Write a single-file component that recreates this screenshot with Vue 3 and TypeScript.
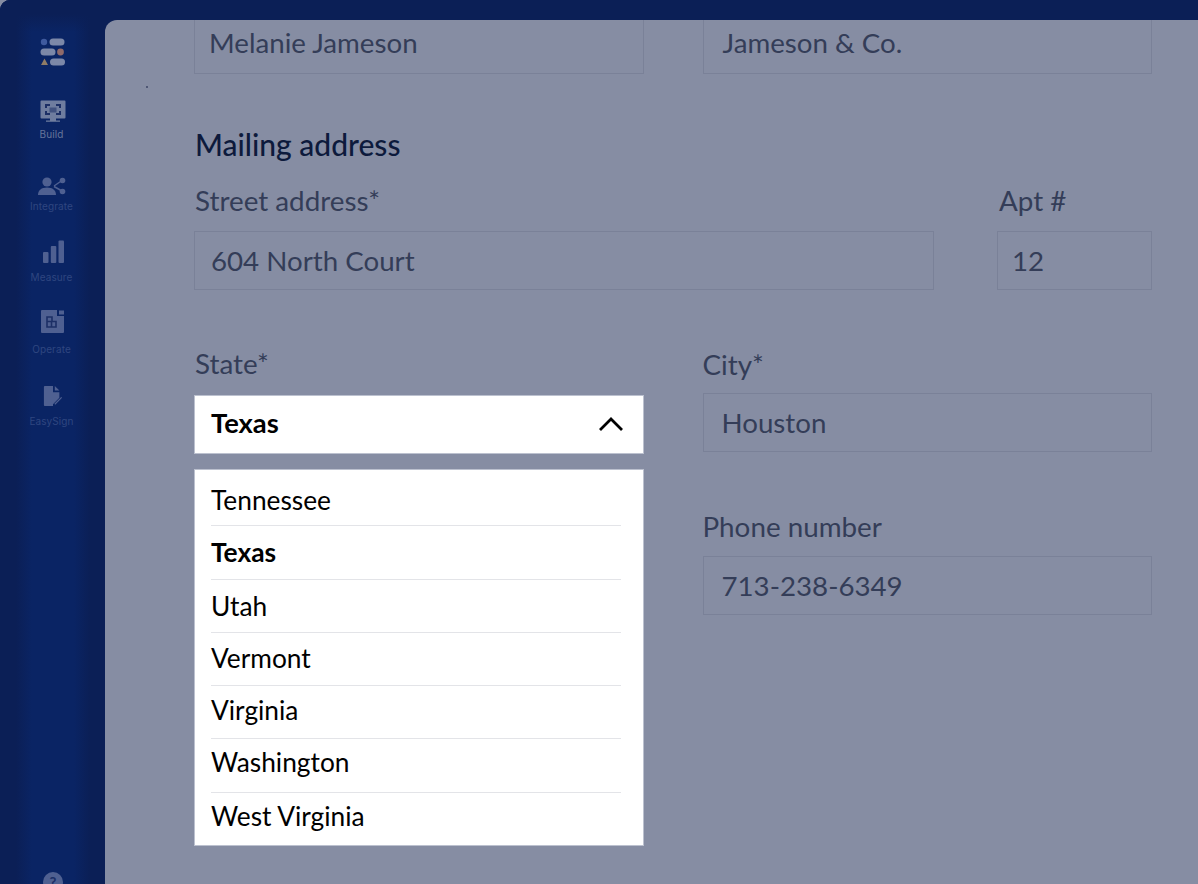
<script setup lang="ts">
interface NavItem {
  label: string;
  icon: string;
}

const navItems: NavItem[] = [
  { label: 'Build', icon: 'build' },
  { label: 'Integrate', icon: 'integrate' },
  { label: 'Measure', icon: 'measure' },
  { label: 'Operate', icon: 'operate' },
  { label: 'EasySign', icon: 'sign' },
];

const states = ['Tennessee', 'Texas', 'Utah', 'Vermont', 'Virginia', 'Washington', 'West Virginia'];

// option text drifts up a little against its divider further down the list
function optionStyle(index: number) {
  return { lineHeight: `${55 - 1.5 * index}px` };
}
</script>

<template>
  <div class="frame">
    <aside class="sidebar">
      <svg class="logo" width="26" height="28" viewBox="0 0 26 28">
        <circle cx="4" cy="4" r="3.2" fill="#3f5a9e" />
        <rect x="9.5" y="0.5" width="15" height="7" rx="3.5" fill="#7c88a8" />
        <rect x="0.5" y="10.5" width="15" height="7" rx="3.5" fill="#7c88a8" />
        <circle cx="20.5" cy="14" r="3.4" fill="#8f6a6a" />
        <path d="M4.500 20.500 L8 27 L1 27 Z" fill="#8f7c66" />
        <rect x="10" y="20.5" width="15" height="7" rx="3.5" fill="#7c88a8" />
      </svg>

      <div v-for="item in navItems" :key="item.label" class="nav-item" :class="[item.icon, { active: item.icon === 'build' }]">
        <svg v-if="item.icon === 'build'" width="26" height="24" viewBox="0 0 26 24">
          <path fill-rule="evenodd" fill="#6f7d9f" d="M1.5 0.5h23a1 1 0 0 1 1 1v16a1 1 0 0 1-1 1H16v2h4v1.2H6V20.500h4v-2H1.500a1 1 0 0 1-1-1v-16a1 1 0 0 1 1-1z" />
          <path fill="none" stroke="#1c2f66" stroke-width="2" d="M6 8V5h4M16 5h4v3M20 11v3h-4M10 14H6v-3" />
          <rect x="9.500" y="7.500" width="7" height="5" fill="#1c2f66" opacity="0.55" />
        </svg>
        <svg v-else-if="item.icon === 'integrate'" width="28" height="18" viewBox="0 0 28 18">
          <circle cx="9" cy="5" r="4.600" fill="#4f6091" />
          <path d="M0 18c0-4.800 3.500-7.500 9-7.500s9 2.700 9 7.500z" fill="#4f6091" />
          <path d="M16 9L24 3.500M16 9.500L24 14" stroke="#4f6091" stroke-width="1.500" />
          <circle cx="24.500" cy="3.500" r="2.800" fill="#4f6091" />
          <circle cx="24.500" cy="14.500" r="2.800" fill="#4f6091" />
        </svg>
        <svg v-else-if="item.icon === 'measure'" width="22" height="23" viewBox="0 0 22 23">
          <rect x="1" y="12" width="5.500" height="11" rx="1" fill="#4f6091" />
          <rect x="8.800" y="6" width="5.500" height="17" rx="1" fill="#4f6091" />
          <rect x="16.500" y="0.500" width="5.500" height="22.500" rx="1" fill="#4f6091" />
        </svg>
        <svg v-else-if="item.icon === 'operate'" width="24" height="23" viewBox="0 0 24 23">
          <path fill="#4f6091" d="M1 0h15v6h7v16a1 1 0 0 1-1 1H1a1 1 0 0 1-1-1V1a1 1 0 0 1 1-1z" />
          <rect x="18" y="0.500" width="5" height="4" fill="#4f6091" />
          <path fill="none" stroke="#1c2f66" stroke-width="1.600" d="M6 7h5v4.500H6zM6 11.500h9V17H6zM10.500 11.500V17" />
        </svg>
        <svg v-else width="20" height="20" viewBox="0 0 20 22">
          <path fill="#4f6091" d="M1 0h9v7h7v6l-7 7v2H1a1 1 0 0 1-1-1V1a1 1 0 0 1 1-1z" />
          <path fill="#4f6091" d="M12 0l5 5h-5z" />
          <path d="M12 20L19.500 12.500" stroke="#4f6091" stroke-width="1.400" />
        </svg>
        <span class="nav-label">{{ item.label }}</span>
      </div>

      <div class="help">?</div>
    </aside>

    <main class="panel">
      <div class="form">
        <div class="row row-names">
          <div class="input">Melanie Jameson</div>
          <div class="input">Jameson &amp; Co.</div>
        </div>

        <h2 class="heading">Mailing address</h2>

        <div class="row row-address">
          <div class="field">
            <label class="label">Street address*</label>
            <div class="input">604 North Court</div>
          </div>
          <div class="field field-apt">
            <label class="label">Apt #</label>
            <div class="input">12</div>
          </div>
        </div>

        <div class="row row-lower">
          <div class="field">
            <label class="label label-state">State*</label>
            <div class="select">
              <span>Texas</span>
              <svg width="26" height="16" viewBox="0 0 26 16">
                <path d="M2 14L13 3L24 14" fill="none" stroke="#000" stroke-width="2.800" />
              </svg>
            </div>
            <ul class="options">
              <li
                v-for="(state, index) in states"
                :key="state"
                :class="{ selected: state === 'Texas' }"
                :style="optionStyle(index)"
              >{{ state }}</li>
            </ul>
          </div>
          <div class="field field-right">
            <label class="label label-city">City*</label>
            <div class="input">Houston</div>
            <label class="label label-phone">Phone number</label>
            <div class="input">713-238-6349</div>
          </div>
        </div>
      </div>
      <span class="speck"></span>
    </main>
  </div>
</template>

<style>
html,
body {
  margin: 0;
  background: #868da3;
  overflow: hidden;
}
</style>

<style scoped>
.frame {
  display: flex;
  width: 1198px;
  height: 884px;
  overflow: hidden;
  border-radius: 10px 0 0 0;
  background: #0b1f56;
  font-family: Lato, 'Liberation Sans', sans-serif;
}

.sidebar {
  position: relative;
  flex: 0 0 105px;
  display: flex;
  flex-direction: column;
  align-items: center;
  padding-top: 38px;
  box-sizing: border-box;
  background:
    linear-gradient(180deg, #0b1f56 0, #0b1f56 14px, rgba(11, 31, 86, 0) 32px),
    linear-gradient(90deg, #0b1f56 0, #0b1f56 16px, #0a2464 32px, #0a2464 74px, #0b1f56 90px, #0b1f56 105px);
}

.logo {
  margin-bottom: 4px;
}

.nav-item {
  display: flex;
  flex-direction: column;
  align-items: center;
  justify-content: flex-end;
  height: 71.750px;
  padding-bottom: 2px;
  box-sizing: border-box;
}

.nav-label {
  margin-top: 8px;
  margin-left: -2px;
  font-family: Inter, sans-serif;
  font-size: 10px;
  letter-spacing: 0.1px;
  line-height: 12px;
  color: #2f4680;
}

.build .nav-label {
  margin-top: 4px;
  color: #66759b;
}

.integrate .nav-label {
  margin-top: 5px;
}

.operate .nav-label {
  margin-top: 10px;
}

.sign .nav-label {
  margin-top: 9px;
}

.help {
  position: absolute;
  left: 43px;
  top: 872px;
  width: 20px;
  height: 20px;
  border-radius: 50%;
  background: #4f6091;
  color: #1c2f66;
  font-size: 15px;
  font-weight: 700;
  line-height: 20px;
  text-align: center;
}

.panel {
  position: relative;
  flex: 1;
  margin-top: 20px;
  padding-left: 89px;
  overflow: hidden;
  border-radius: 12px 0 0 0;
  background: #868da3;
  color: #343d58;
}

.speck {
  position: absolute;
  left: 41px;
  top: 66px;
  width: 2px;
  height: 2px;
  border-radius: 50%;
  background: #3c4666;
}

.form {
  width: 958px;
  margin-top: -6px;
}

.row {
  display: flex;
}

.row-names {
  gap: 59px;
  height: 59px;
}

.row-names .input {
  flex: none;
  width: 449.500px;
  height: 60px;
  padding-left: 14px;
  padding-bottom: 3px;
}

.row-names .input + .input {
  padding-left: 19px;
}

.heading {
  margin: 54px 0 0;
  padding-left: 1px;
  font-size: 30px;
  font-weight: 500;
  line-height: 34px;
  color: #0d1a3c;
}

.row-address {
  gap: 63px;
  margin-top: 24px;
}

.row-address .field:first-child {
  width: 740px;
}

.row-address .field:last-child {
  width: 155px;
}

.field-apt .label {
  padding-left: 2px;
}

.field-apt .input {
  padding-left: 14px;
}

.row-lower {
  gap: 59px;
  margin-top: 58px;
}

.row-lower .field {
  width: 449.500px;
}

.field {
  display: flex;
  flex-direction: column;
}

.field-right {
  padding-top: 1px;
}

.field-right .input {
  padding-left: 18px;
}

.label {
  height: 46px;
  padding-left: 1px;
  font-size: 27.800px;
  line-height: 32px;
  color: #343d58;
}

.label-state {
  height: 47px;
}

.label-city {
  height: 44px;
  padding-left: 0;
}

.label-phone {
  margin-top: 59px;
  height: 45px;
  padding-left: 0;
}

.input {
  display: flex;
  align-items: center;
  height: 59px;
  padding-left: 16px;
  box-sizing: border-box;
  border: 1.500px solid #7a8198;
  font-size: 27.700px;
  color: #343d58;
}

.select {
  display: flex;
  align-items: center;
  justify-content: space-between;
  height: 58.500px;
  padding: 0 19px 0 16px;
  box-sizing: border-box;
  border: 1.500px solid #bcc1cf;
  background: #fff;
  color: #000;
  font-size: 27.400px;
  font-weight: 700;
}

.select span {
  padding-bottom: 4px;
}

.options {
  margin: 15.500px 0 0;
  padding: 3px 22px 0 16px;
  list-style: none;
  box-sizing: border-box;
  height: 377px;
  border: 1.500px solid #bcc1cf;
  background: #fff;
  color: #000;
  font-size: 26.300px;
}

.options li {
  height: 53.300px;
  box-sizing: border-box;
  border-bottom: 1.500px solid #e3e4e8;
}

.options li:last-child {
  border-bottom: 0;
}

.options li.selected {
  font-weight: 700;
}
</style>
